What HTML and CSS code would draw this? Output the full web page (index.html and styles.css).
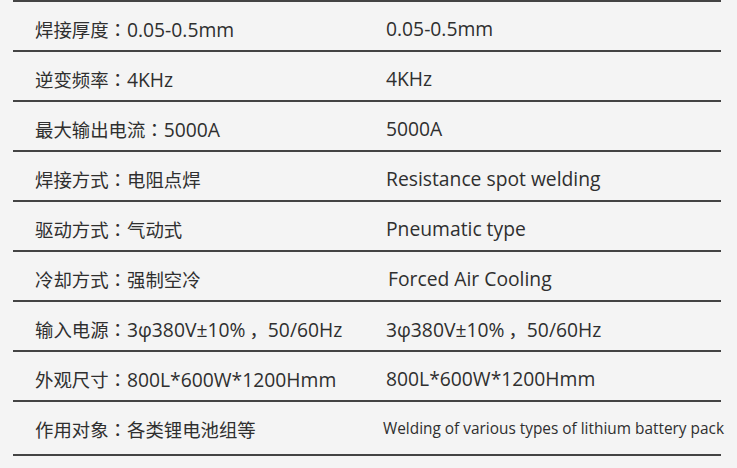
FILE: index.html
```html
<!DOCTYPE html>
<html lang="zh-CN">
<head>
<meta charset="utf-8">
<title>参数</title>
<link rel="stylesheet" href="styles.css">
</head>
<body>
<div class="spec-table">
  <div class="row"><div class="cell"><span class="zh">焊接厚度</span><span class="punct" lang="zh-Hant">：</span>0.05-0.5mm</div><div class="cell">0.05-0.5mm</div></div>
  <div class="row"><div class="cell"><span class="zh">逆变频率</span><span class="punct" lang="zh-Hant">：</span>4KHz</div><div class="cell">4KHz</div></div>
  <div class="row"><div class="cell"><span class="zh">最大输出电流</span><span class="punct" lang="zh-Hant">：</span>5000A</div><div class="cell">5000A</div></div>
  <div class="row"><div class="cell"><span class="zh">焊接方式</span><span class="punct" lang="zh-Hant">：</span><span class="zh">电阻点焊</span></div><div class="cell">Resistance spot welding</div></div>
  <div class="row"><div class="cell"><span class="zh">驱动方式</span><span class="punct" lang="zh-Hant">：</span><span class="zh">气动式</span></div><div class="cell">Pneumatic type</div></div>
  <div class="row"><div class="cell"><span class="zh">冷却方式</span><span class="punct" lang="zh-Hant">：</span><span class="zh">强制空冷</span></div><div class="cell cell-shift">Forced Air Cooling</div></div>
  <div class="row"><div class="cell"><span class="zh">输入电源</span><span class="punct" lang="zh-Hant">：</span>3φ380V±10%<span class="comma">，</span>50/60Hz</div><div class="cell">3φ380V±10%<span class="comma">，</span>50/60Hz</div></div>
  <div class="row"><div class="cell"><span class="zh">外观尺寸</span><span class="punct" lang="zh-Hant">：</span>800L*600W*1200Hmm</div><div class="cell">800L*600W*1200Hmm</div></div>
  <div class="row row-last"><div class="cell"><span class="zh">作用对象</span><span class="punct" lang="zh-Hant">：</span><span class="zh">各类锂电池组等</span></div><div class="cell cell-small">Welding of various types of lithium battery pack</div></div>
</div>
</body>
</html>
```
FILE: styles.css
```css
html, body {
  margin: 0;
  padding: 0;
  background: #f4f4f4;
}
body {
  font-family: "Open Sans", "Noto Sans CJK SC", sans-serif;
  color: #2f2f2f;
  font-size: 19.3px;
  width: 737px;
  height: 468px;
  overflow: hidden;
}
.spec-table {
  margin-left: 13px;
  width: 708px;
  border-bottom: 2px solid #444;
}
.row {
  box-sizing: border-box;
  height: 50px;
  border-top: 2px solid #444;
  padding-top: 6px;
  display: grid;
  grid-template-columns: 351px 1fr;
  align-items: center;
}
.row-last {
  height: 54px;
  padding-top: 2px;
}
.cell {
  padding-left: 22px;
  line-height: 24px;
  white-space: nowrap;
}
.zh {
  font-family: "Noto Sans CJK SC", sans-serif;
  font-size: 18.4px;
}
.punct {
  font-family: "Noto Sans CJK TC", sans-serif;
  font-size: 18.4px;
}
.comma {
  font-family: "Noto Sans CJK SC", sans-serif;
  font-size: 18.4px;
  padding-left: 4px;
}
.cell-shift {
  padding-left: 24px;
}
.cell-small {
  font-size: 15.4px;
  padding-left: 19px;
}
```
